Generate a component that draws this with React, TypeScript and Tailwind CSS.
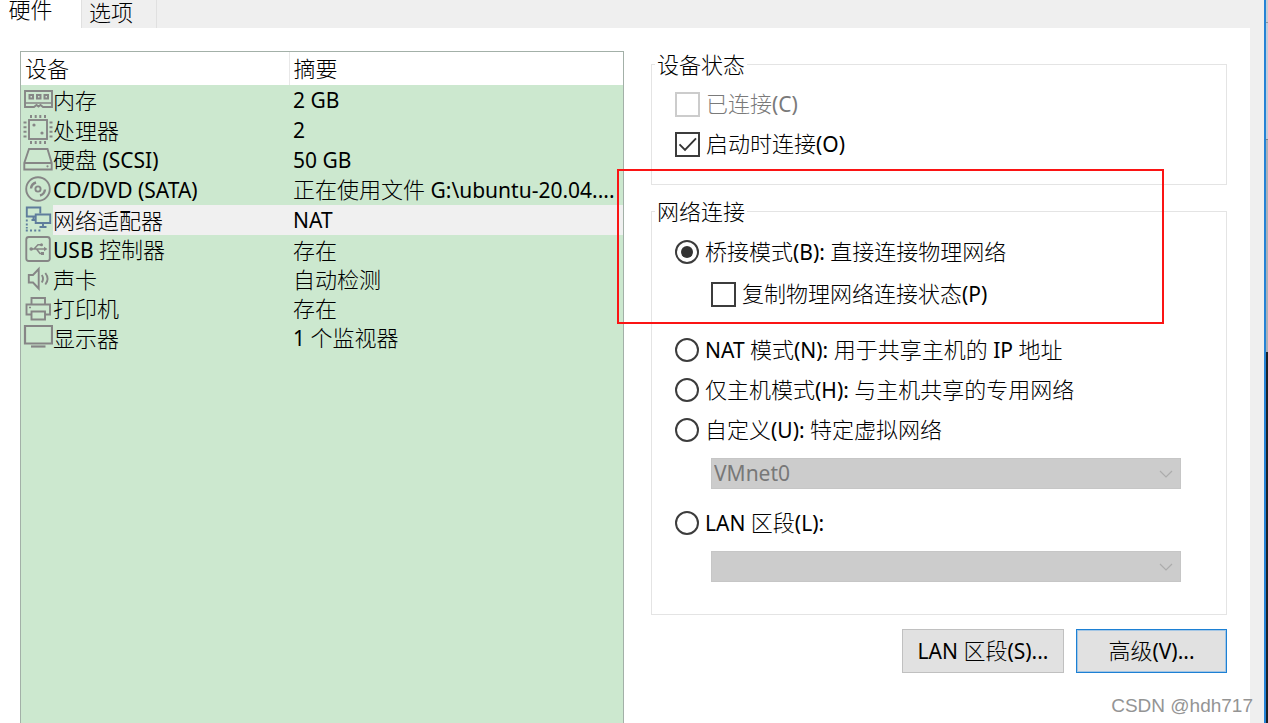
import { useState } from "react";
import type { ReactNode } from "react";

function Icon({ children, blue = false }: { children: ReactNode; blue?: boolean }) {
  return (
    <svg
      viewBox="0 0 30 30"
      className={blue ? "block h-[30px] w-[30px] text-[#5f7d9c]" : "block h-[30px] w-[30px] text-[#868686]"}
      fill="none"
      stroke="currentColor"
      strokeWidth="1.9"
      aria-hidden="true"
    >
      {children}
    </svg>
  );
}

const memoryIcon = (
  <Icon>
    <path d="M2 6h27v16h-9l-2.500-2-2 1.500-2-1.500-2.500 2H2z" />
    <path d="M2 18h27" strokeWidth="1.500" />
    <path d="M6.500 10h3.500v3.500h-3.500zM14 10h3.500v3.500h-3.500zM21.500 10h3.500v3.500h-3.500z" strokeWidth="2" />
  </Icon>
);

const cpuIcon = (
  <Icon>
    <rect x="6" y="5" width="18" height="19" />
    <path d="M8 0v3M12.700 0v3M17.300 0v3M22 0v3M8 26v3M12.700 26v3M17.300 26v3M22 26v3M.5 7.500h3M.5 12.200h3M.5 16.800h3M.5 21.500h3M26.500 7.500h3M26.500 12.200h3M26.500 16.800h3M26.500 21.500h3" strokeWidth="2" />
    <circle cx="11" cy="10" r="1.600" fill="currentColor" stroke="none" />
    <circle cx="19" cy="18" r="1.600" fill="currentColor" stroke="none" />
  </Icon>
);

const diskIcon = (
  <Icon>
    <path d="M6 4h18.500l4.200 14v6.500H1.300V18zM1.300 18h27.400" />
    <circle cx="24.500" cy="21.300" r="1.100" fill="currentColor" stroke="none" />
  </Icon>
);

const discIcon = (
  <Icon>
    <circle cx="15" cy="14" r="11.800" />
    <circle cx="15" cy="14" r="2.600" />
    <path d="M8 13.500a7 7 0 0 1 5-6M22 14.500a7 7 0 0 1-5 6" strokeWidth="2.400" />
  </Icon>
);

const networkIcon = (
  <Icon blue>
    <path d="M12 11.500H3.800V2.500h13.500v6" />
    <path d="M12.700 9.500h14.500v8.500H12.700zM20 18v4M16.500 22h7M8.500 15h4M10.500 11.500v3" />
    <path d="M3.800 14.500v2M3.800 18.500v2M2.800 25.500h2M7 25.500h2M11.200 25.500h2M15.400 25.500h2M3.800 22v1.500" />
  </Icon>
);

const usbIcon = (
  <Icon>
    <rect x="3.300" y="2" width="23.500" height="24" rx="2.500" />
    <path d="M8 14h14M11 14l4-4.300h3M13.500 14l3.500 4.500h2" strokeWidth="1.500" />
    <circle cx="8.200" cy="14" r="1.800" fill="currentColor" stroke="none" />
    <circle cx="18.500" cy="9.700" r="1.500" fill="currentColor" stroke="none" />
    <path d="M21 11.700l3.500 2.300-3.500 2.300zM18 17h3v3h-3z" fill="currentColor" stroke="none" />
  </Icon>
);

const soundIcon = (
  <Icon>
    <path d="M5.800 10h4.200l5.700-6v19.500l-5.700-6h-4.200z" />
    <path d="M18.800 10q2.400 3.700 0 7.500M22.300 8q4.500 5.700 0 11.500" />
  </Icon>
);

const printerIcon = (
  <Icon>
    <path d="M8.500 10V4h13.500v6M8.500 20.500H3.500V10.500h23.500v10h-5" />
    <path d="M8.500 17.500h13.500v8H8.500z" />
    <path d="M6 13.500h2" strokeWidth="1.500" />
  </Icon>
);

const displayIcon = (
  <Icon>
    <path d="M2 3h27v17.500H2z" strokeWidth="2.200" />
    <path d="M8 23.500h14.500" strokeWidth="2.200" />
  </Icon>
);

const devices = [
  { icon: memoryIcon, name: "内存", summary: "2 GB" },
  { icon: cpuIcon, name: "处理器", summary: "2" },
  { icon: diskIcon, name: "硬盘 (SCSI)", summary: "50 GB" },
  { icon: discIcon, name: "CD/DVD (SATA)", summary: "正在使用文件 G:\\ubuntu-20.04...." },
  { icon: networkIcon, name: "网络适配器", summary: "NAT" },
  { icon: usbIcon, name: "USB 控制器", summary: "存在" },
  { icon: soundIcon, name: "声卡", summary: "自动检测" },
  { icon: printerIcon, name: "打印机", summary: "存在" },
  { icon: displayIcon, name: "显示器", summary: "1 个监视器" },
];

// Latin runs are set a little smaller and heavier than the Chinese around them.
function Mixed({ text }: { text: string }) {
  return (
    <span className="whitespace-pre">
      {text.split(/([\x20-\x7e]+)/).map((run, i) =>
        i % 2 === 1 ? <span key={i} className="text-[21px] font-normal">{run}</span> : run,
      )}
    </span>
  );
}

function DeviceTable() {
  return (
    <div className="border border-b-0 border-[#a3b0a8] bg-[#cce8cf]">
      <table className="h-[300px] w-full table-fixed border-collapse whitespace-nowrap">
        <colgroup>
          <col className="w-[32px]" />
          <col className="w-[236px]" />
          <col />
        </colgroup>
        <thead>
          <tr className="h-[33px] bg-white text-left">
            <th colSpan={2} className="border-r border-[#e8e8e8] p-0 pl-[4px] font-light">设备</th>
            <th className="p-0 pl-[4px] font-light">摘要</th>
          </tr>
        </thead>
        <tbody>
          {devices.map((d) => {
            const fill = d.name === "网络适配器" ? "bg-[#f0f0f0]" : "";
            return (
              <tr key={d.name}>
                <td className="p-0 pl-[2px]"><div className="flex h-[29px] items-center">{d.icon}</div></td>
                <td className={`p-0 ${fill}`}><Mixed text={d.name} /></td>
                <td className={`overflow-hidden p-0 pl-[4px] ${fill}`}><Mixed text={d.summary} /></td>
              </tr>
            );
          })}
        </tbody>
      </table>
    </div>
  );
}

function CheckRow({ label, checked, disabled, onChange }: { label: string; checked: boolean; disabled?: boolean; onChange?: () => void }) {
  return (
    <label className={disabled ? "flex h-10 items-center gap-[6px] text-[#7a7a7a]" : "flex h-10 items-center gap-[6px]"}>
      <span className="relative h-[25px] w-[25px] shrink-0">
        <input
          type="checkbox"
          checked={checked}
          disabled={disabled}
          onChange={onChange}
          className="block h-[25px] w-[25px] appearance-none border-2 border-[#3c3c3c] bg-white disabled:border-[#ccc]"
        />
        {checked && (
          <svg viewBox="0 0 25 25" className="pointer-events-none absolute inset-0" fill="none" stroke="#333" strokeWidth="1.9">
            <path d="M4.500 12.300l5.500 5.500L21 6.300" />
          </svg>
        )}
      </span>
      <Mixed text={label} />
    </label>
  );
}

function RadioRow({ label, checked, onChange }: { label: string; checked: boolean; onChange: () => void }) {
  return (
    <label className="flex h-10 items-center gap-[6px]">
      <span className="flex h-[24px] w-[24px] shrink-0">
        <input
          type="radio"
          name="network"
          checked={checked}
          onChange={onChange}
          className="h-[24px] w-[24px] appearance-none rounded-full border-2 border-[#3c3c3c] bg-white p-[4px] before:block before:h-full before:w-full before:rounded-full checked:before:bg-[#333]"
        />
      </span>
      <Mixed text={label} />
    </label>
  );
}

function DisabledSelect({ label, value }: { label: string; value: string }) {
  return (
    <div className="relative mt-[8px] mr-[45px] ml-[36px]">
      <select
        disabled
        aria-label={label}
        className="block h-[31px] w-full appearance-none border border-[#c6c6c6] bg-[#ccc] px-[2px] text-[21px] font-normal text-[#787878] opacity-100"
      >
        <option>{value}</option>
      </select>
      <svg viewBox="0 0 14 8" className="pointer-events-none absolute top-[12px] right-[8px] h-[8px] w-[14px]" fill="none" stroke="#acacac" strokeWidth="1.200">
        <path d="M1 1l6 6 6-6" />
      </svg>
    </div>
  );
}

export default function App() {
  const [autoConnect, setAutoConnect] = useState(true);
  const [replicate, setReplicate] = useState(false);
  const [mode, setMode] = useState("bridged");

  return (
    <div className="relative flex h-screen overflow-hidden bg-[#efefef] font-['Noto_Sans','Noto_Sans_CJK_SC',sans-serif] text-[22px] leading-[29px] font-light text-black">
      <div className="flex min-w-0 flex-1 flex-col pr-[14px]">
        <div className="flex h-[28px] shrink-0 items-end" role="tablist">
          <button role="tab" aria-selected="true" className="h-[28px] w-[81px] bg-white pr-[20px] pb-[10px] leading-[18px]">
            硬件
          </button>
          <button role="tab" aria-selected="false" className="h-[28px] w-[76px] border-r border-l border-[#e0e0e0] pr-[16px] pb-[4px] leading-[24px]">
            选项
          </button>
        </div>

        <main className="grid flex-1 grid-cols-[minmax(0,604fr)_minmax(0,576fr)] gap-[27px] bg-white pt-[23px] pr-[23px] pl-[20px]">
          <DeviceTable />

          <div className="-mt-[2px]">
            <fieldset className="border border-[#e4e4e4] px-[23px] pb-[20px]">
              <legend className="-ml-[20px] px-[2px] leading-[30px]">设备状态</legend>
              <div className="pt-[5px]">
                <CheckRow label="已连接(C)" checked={false} disabled />
                <CheckRow label="启动时连接(O)" checked={autoConnect} onChange={() => setAutoConnect(!autoConnect)} />
              </div>
            </fieldset>

            <fieldset className="mt-[11px] border border-[#e4e4e4] pb-[32px] pl-[23px]">
              <legend className="-ml-[20px] px-[2px] leading-[30px]">网络连接</legend>
              <div className="pt-[6px]">
                <RadioRow label="桥接模式(B): 直接连接物理网络" checked={mode === "bridged"} onChange={() => setMode("bridged")} />
                <div className="mt-[2px] pl-[36px]">
                  <CheckRow label="复制物理网络连接状态(P)" checked={replicate} onChange={() => setReplicate(!replicate)} />
                </div>
              </div>
              <div className="pt-[16px]">
                <RadioRow label="NAT 模式(N): 用于共享主机的 IP 地址" checked={mode === "nat"} onChange={() => setMode("nat")} />
                <RadioRow label="仅主机模式(H): 与主机共享的专用网络" checked={mode === "host"} onChange={() => setMode("host")} />
                <RadioRow label="自定义(U): 特定虚拟网络" checked={mode === "custom"} onChange={() => setMode("custom")} />
                <DisabledSelect label="特定虚拟网络" value="VMnet0" />
              </div>
              <div className="pt-[14px]">
                <RadioRow label="LAN 区段(L):" checked={mode === "lan"} onChange={() => setMode("lan")} />
                <DisabledSelect label="LAN 区段" value="" />
              </div>
            </fieldset>

            <div className="mt-[14px] flex justify-end gap-[12px]">
              <button className="h-[44px] w-[162px] border border-[#c0c0c0] bg-[#e1e1e1]"><Mixed text="LAN 区段(S)..." /></button>
              <button className="h-[44px] w-[151px] border border-[#1c80d4] bg-[#e1e1e1] shadow-[inset_0_0_0_1px_#a4c6e4]"><Mixed text="高级(V)..." /></button>
            </div>
          </div>
        </main>
      </div>

      <div className="w-[2px] bg-[#2583d6]" />
      <div className="flex w-[2px] flex-col" aria-hidden="true">
        <div className="h-[23px] border-b border-[#8f959d] bg-[#c9cdd4]" />
        <div className="h-[117px] border-b border-[#7c8085] bg-[#c3ccda]" />
        <div className="h-[212px] bg-[#aab0b8]" />
        <div className="flex-1 bg-[#1c2228]" />
      </div>

      <div className="pointer-events-none absolute top-[169px] left-[617px] h-[155px] w-[547px] border-2 border-[#fb1414]" />
      <div className="pointer-events-none absolute right-[15px] bottom-[5px] font-['Liberation_Sans',sans-serif] text-[19px] leading-[24px] font-normal text-[#949494]">
        CSDN @hdh717
      </div>
    </div>
  );
}
